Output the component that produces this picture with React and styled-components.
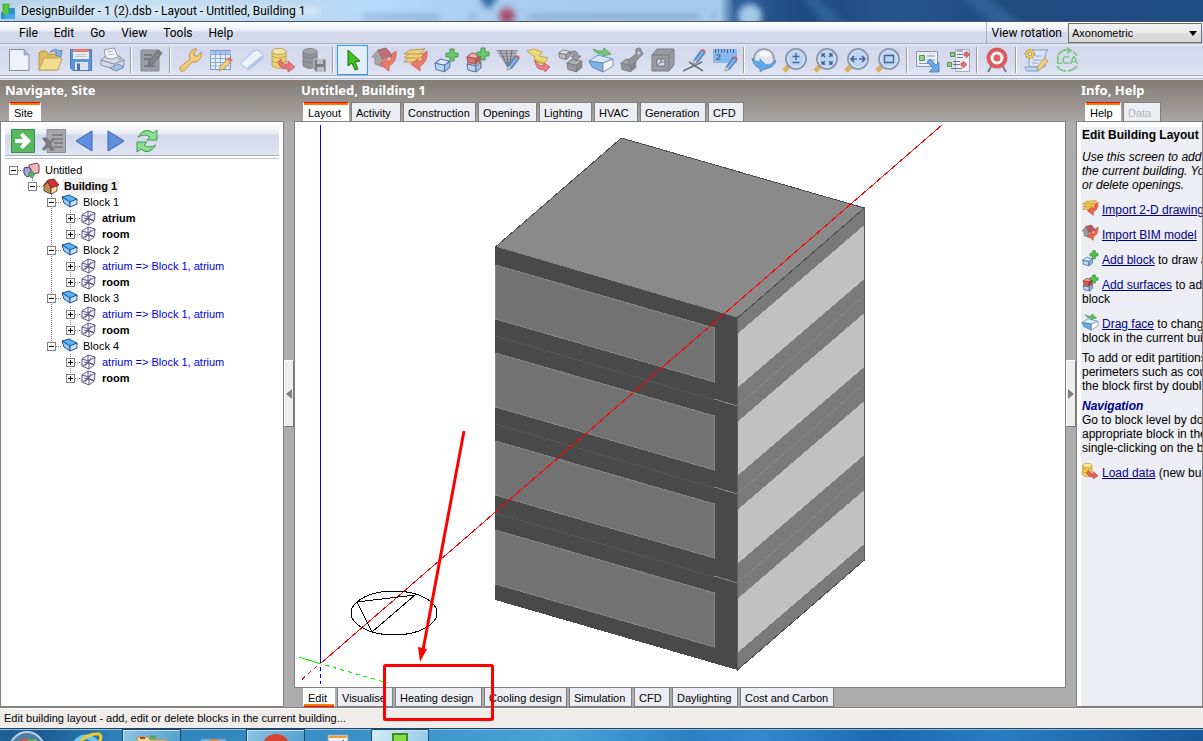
import React from "react";
import styled, { createGlobalStyle, css } from "styled-components";

const UI = '"Liberation Sans", Arial, sans-serif';
const SEGOE = 'Roboto, "Noto Sans", sans-serif';
const LINE = "#808080";

const GlobalStyle = createGlobalStyle`
  * { box-sizing: border-box; }
  body { margin: 0; font: 11px ${UI}; color: #000; overflow: hidden; }
  button { font: inherit; color: inherit; background: none; border: 0; padding: 0; }
  ul { list-style: none; margin: 0; padding: 0; }
  svg { display: block; }
`;

const Window = styled.div`
  height: 100vh;
  display: flex;
  flex-direction: column;
  overflow: hidden;
`;

/* ---------- title bar ---------- */
const TitleBar = styled.header`
  position: relative;
  flex: 0 0 22px;
  display: flex;
  align-items: center;
  gap: 5px;
  border-bottom: 1px solid #46566b;
  background: linear-gradient(90deg, #b4cfe6 0, #c3dcf0 120px, #b9d6ef 300px, #b9dcfb 360px, #a9cef0 480px, #a6caea 720px, #2c5f98 735px, #1d4a80 800px, #26558c 900px, #1e4b80 1010px, #1f4e85 1203px);
`;
const TitleArt = styled.svg`
  position: absolute;
  inset: 0;
  width: 100%;
  height: 100%;
`;
const AppIcon = styled.svg`
  position: relative;
  width: 16px;
  height: 16px;
`;
const TitleText = styled.h1`
  position: relative;
  margin: 0;
  font: 12px/20px ${SEGOE};
  white-space: nowrap;
`;

/* ---------- menus and toolbar ---------- */
const MenuRow = styled.div`
  flex: 0 0 22px;
  display: flex;
  justify-content: space-between;
  border-bottom: 1px solid #a9adb8;
  background: linear-gradient(#fff 0, #e9edf6 9px, #d3d8ea 10px, #d5d9ec 100%);
`;
const MenuBar = styled.nav`
  display: flex;
  gap: 16px;
  padding-left: 19px;
`;
const MenuItem = styled.button`
  font: 12px/20px ${SEGOE};
`;
const RotationBox = styled.label`
  display: flex;
  align-items: center;
  gap: 6px;
  padding: 0 1px 0 5px;
  border-left: 1px solid #a9adb8;
  font: 12px/20px ${SEGOE};
  white-space: nowrap;
`;
const SelectWrap = styled.span`
  position: relative;
  display: block;
`;
const Select = styled.select`
  display: block;
  appearance: none;
  width: 134px;
  height: 20px;
  padding: 0 0 0 3px;
  border: 1px solid #707070;
  border-radius: 0;
  color: #000;
  background: linear-gradient(#f2f2f2, #ebebeb 50%, #dddddd 51%, #d8d8d8);
  font: 11px ${UI};
`;
const SelectArrow = styled.svg`
  position: absolute;
  right: 5px;
  top: 8px;
  pointer-events: none;
`;
const ToolRow = styled.div`
  flex: 0 0 36px;
  display: flex;
  align-items: flex-start;
  padding: 1px 0 0 3px;
  background: linear-gradient(#e6eaf5 0, #d3d8ec 3px, #d5daed 16px, #dfe3f3 31px, #a9adb8 31px, #a9adb8 32px, #e9edf7 32px, #e9edf7 34px, #b9bfd3 34px, #b9bfd3 35px, #dfe4f2 35px);
`;
const ToolButton = styled.button`
  flex: 0 0 31px;
  height: 30px;
  display: grid;
  place-items: center;
  border: 1px solid ${(p) => (p.$on ? "#3399ff" : "transparent")};
  background: ${(p) => (p.$on ? "#e4eefb" : "none")};
  svg { width: 24px; height: 24px; opacity: ${(p) => (p.$on ? 1 : 0.8)}; }
`;
const Separator = styled.span`
  flex: 0 0 8px;
  height: 26px;
  margin-top: 2px;
  background: linear-gradient(90deg, transparent 3px, #9a9ca4 3px, #9a9ca4 4px, #fff 4px, #fff 5px, transparent 5px);
`;

/* ---------- work area ---------- */
const Main = styled.main`
  flex: 1 1 0;
  min-height: 0;
  display: flex;
  background: linear-gradient(#827c75 0, #a3a09e 36px, #acacac 44px);
  border-bottom: 1px solid ${LINE};
`;
const Column = styled.section`
  display: flex;
  flex-direction: column;
  min-width: 0;
  position: relative;
  ${(p) => (p.$w ? css`flex: 0 0 ${p.$w}px;` : css`flex: 1 1 0;`)}
`;
const ColumnTitle = styled.h2`
  margin: 0;
  padding: 0 5px 0 ${(p) => p.$pad || 5}px;
  flex: 0 0 22px;
  font: bold 13px/20px "Noto Sans", "Open Sans", sans-serif;
  color: #fff;
  white-space: nowrap;
`;
const TabRow = styled.div`
  flex: 0 0 19px;
  display: flex;
  gap: 2px;
  padding-left: 9px;
`;
const Tab = styled.button`
  flex: 0 0 ${(p) => p.$w}px;
  height: 19px;
  padding-left: 4px;
  text-align: left;
  white-space: nowrap;
  overflow: hidden;
  line-height: 20px;
  background: #eceef3;
  border: 1px solid ${LINE};
  border-width: ${(p) => (p.$bottom ? "0 1px 1px 1px" : "1px 1px 0 1px")};
  &:disabled { color: #b4b4b8; }
  ${(p) => p.$active && css`
    background: #fff;
    border-color: ${p.$bottom ? "#fff #fff #f00 #fff" : "#f00 #fff #fff #fff"};
    box-shadow: inset 0 ${p.$bottom ? -2 : 2}px 0 #ff7a00;
  `}
`;
const Panel = styled.div`
  flex: 1 1 0;
  min-height: 0;
  overflow: hidden;
  background: #fff;
  border: 1px solid ${LINE};
`;
const Splitter = styled.div`
  flex: 0 0 10px;
  display: flex;
  align-items: center;
`;
const SplitHandle = styled.button`
  width: 10px;
  height: 67px;
  display: grid;
  place-items: center;
  background: #eeeeee;
  border: 1px solid #fff;
  border-color: #fff #777 #777 #fff;
`;

/* ---------- navigator ---------- */
const NavTools = styled.div`
  display: flex;
  align-items: center;
  gap: 7px;
  height: 33px;
  margin: 4px 4px 0 4px;
  padding: 0 0 4px 6px;
  background: linear-gradient(#fdfdff 0, #e6e9f5 8px, #d2d7eb 9px, #dfe4f5 29px, #a9adb8 29px, #a9adb8 30px, #fff 30px, #fff 32px, #b4c0da 32px);
  svg { width: 24px; height: 24px; }
`;
const Tree = styled.ul`
  padding: 3px 0 0 3px;
`;
const TreeRow = styled.li`
  display: flex;
  height: 16px;
  line-height: 16px;
  white-space: nowrap;
`;
const TreeIcon = styled.svg`
  flex: 0 0 18px;
  width: 18px;
  height: 16px;
  margin-right: 2px;
`;
const TreeLabel = styled.span`
  padding: 0 2px;
  color: ${(p) => (p.$link ? "#0000e0" : "#000")};
  font-weight: ${(p) => (p.$bold ? "bold" : "normal")};
  background: ${(p) => (p.$selected ? "#f0f0f0" : "none")};
`;

/* ---------- help ---------- */
const HelpBody = styled.article`
  height: 100%;
  margin: 5px 0 0 4px;
  padding: 1px 0 0 1px;
  background: #eceef3;
  font: 12px/14px ${UI};
  white-space: nowrap;
`;
const HelpHeading = styled.h3`
  margin: 0 0 8px;
  font: bold 12px/14px ${UI};
`;
const HelpText = styled.p`
  margin: 0 0 6px;
  font-style: ${(p) => (p.$italic ? "italic" : "normal")};
  a { color: #00008b; }
  strong { color: #00008b; font-style: italic; }
  svg { display: inline-block; vertical-align: -2px; width: 16px; height: 16px; margin: 2px 4px 0 0; }
`;

/* ---------- canvas ---------- */
const Scene = styled.svg`
  width: 100%;
  height: 100%;
`;
const Markup = styled.svg`
  position: absolute;
  left: 0;
  top: 0;
  width: 100%;
  height: 100%;
  overflow: visible;
  pointer-events: none;
`;

/* ---------- status and task bar ---------- */
const StatusBar = styled.footer`
  flex: 0 0 20px;
  padding: 0 4px;
  border-top: 1px solid #fff;
  line-height: 19px;
  background: #f0ecea;
  white-space: nowrap;
`;
const TaskBar = styled.div`
  flex: 0 0 13px;
  display: flex;
  overflow: hidden;
  border-top: 1px solid #26425f;
  box-shadow: inset 0 1px 0 #8fc3e6;
  background: linear-gradient(90deg, #1d6299 0, #1c5c94 40px, #2c80b8 115px, #3f96cc 430px, #4aa2d8 560px, #2c80c2 690px, #3488cc 760px, #1d69b0 880px, #2a7cc0 1000px, #17599a 1203px);
`;
const TaskButton = styled.button`
  flex: 0 0 ${(p) => p.$w}px;
  height: 40px;
  display: flex;
  justify-content: center;
  border: 1px solid transparent;
  ${(p) => p.$open && css`
    border-color: #1c4a70;
    box-shadow: inset 1px 1px 0 #c5e4f5;
    background: linear-gradient(110deg, ${p.$open === "active" ? "#d5ecf8, #8cc4e4" : "#8dc3e2, #4c9bcb"});
  `}
`;

/* ---------- small shapes shared by icons ---------- */
const Block = ({ x = 0, y = 0, s = 1, top = "#d8edff", side = "#8fbde8", front = "#b5d6f5", edge = "#3d5f93" }) => (
  <g transform={`translate(${x} ${y}) scale(${s})`} stroke={edge} strokeWidth="1" strokeLinejoin="round">
    <path d="M1 5 6 1 15 3 10 7Z" fill={top} />
    <path d="M1 5 10 7V13L2 11Z" fill={front} />
    <path d="M10 7 15 3V9L10 13Z" fill={side} />
  </g>
);
const Plus = ({ x, y }) => (
  <path transform={`translate(${x} ${y})`} d="M4 0h4v4h4v4h-4v4h-4v-4h-4v-4h4z" fill="#52c552" stroke="#258a2b" />
);
const Pencil = ({ x = 0, y = 0, c = "#4a86cf" }) => (
  <g transform={`translate(${x} ${y})`}>
    <path d="M1 15 2 11 9 1 13 4 6 13Z" fill={c} stroke="#29558f" strokeWidth=".8" />
    <path d="M9 1 10 0Q13 0 14 3L13 4Z" fill="#e0483e" />
    <path d="M1 15 2 11 5 13Z" fill="#e9d3a5" />
    <path d="M4 12 11 3" stroke="#a8cbf2" />
  </g>
);
const Curl = () => (
  <path d="M20 6 24 3Q25 14 17 18V23L8 16 15 11V14Q20 13 20 6Z" fill="#f0624a" stroke="#c43a28" strokeWidth=".8" />
);
const Cylinder = ({ x = 0, y = 0, c = "#f3d251", e = "#a8851c", hi = "#fbeb9c" }) => (
  <g transform={`translate(${x} ${y})`} fill={c} stroke={e} strokeWidth=".8">
    <path d="M1 3V18Q8 23 15 18V3" />
    <path d="M1 8Q8 12 15 8M1 13Q8 17 15 13" fill="none" />
    <ellipse cx="8" cy="3.500" rx="7" ry="3" fill={hi} />
  </g>
);
const Lens = ({ children }) => (
  <>
    <path d="M1 23 7 17" stroke="#dba63c" strokeWidth="5" />
    <circle cx="13" cy="11" r="10" fill="#b3d3f6" stroke="#7c8aa0" strokeWidth="2" />
    <circle cx="13" cy="11" r="8.300" fill="none" stroke="#e6f1fd" />
    <g stroke="#2b4476" strokeWidth="1.300" fill="none">{children}</g>
  </>
);

const icons = {
  new: <><path d="M2.500 1.500H17L22 7V22.500H2.500Z" fill="#f6f7fe" stroke="#77798c" /><path d="M17 1.500V7H22Z" fill="#9aa4d8" stroke="#8088b4" strokeWidth=".6" /></>,
  open: <><path d="M1 22V5L3 3H8L10 6H19V22Z" fill="#dcb33a" stroke="#b08920" /><path d="M1 22 6 10H24L20 22Z" fill="#f8dd7c" stroke="#b99530" /><path d="M12 4Q17-1 21 3L24 2 23 9 17 7 19 5Q16 2 12 4Z" fill="#7ba4d6" stroke="#3f6a9e" strokeWidth=".8" /></>,
  save: <><path d="M1.500 1.500H22.500V22.500H4L1.500 20Z" fill="#3d86d8" stroke="#2b5d9c" /><path d="M4 1H20V11H4Z" fill="#f3f3f6" /><path d="M4 1H20V4H4Z" fill="#e86058" /><path d="M6 6.500H18M6 8.500H18" stroke="#c0c2cc" /><path d="M6 14H19V22H6Z" fill="#dfe5ee" /><path d="M8 15.500H11V22H8Z" fill="#2a5a9b" /></>,
  print: <><path d="M1 12 6 8H19L24 12V17L18 22 1 17Z" fill="#d8dae6" stroke="#74788e" /><path d="M6 10 4 2 14 0 18 9 12 11Z" fill="#fff" stroke="#7e8296" /><path d="M7 4 13 3M8 7 14 6" stroke="#a4a9bb" /><path d="M1 12 14 16 24 12M14 16V20" stroke="#74788e" fill="none" /><path d="M10 20 18 16 24 19 16 23Z" fill="#9fc0ec" stroke="#55719c" /><path d="M18 11H21" stroke="#50b050" strokeWidth="1.500" /></>,
  edit: <><path d="M2 2H20V23H2Z" fill="#8f8f93" stroke="#737377" /><path d="M5 7H13M5 11H11M5 18H17" stroke="#55555a" strokeWidth="1.500" /><path d="M9 18 10 13 19 2 23 5 14 16Z" fill="#707074" stroke="#4c4c50" /></>,
  wrench: <path d="M2 19 12 11Q10 4 16 1L19 1 16 5 17 8 20 8 23 4Q25 11 18 14L14 14 6 23Q3 24 2 22Z" fill="#f4c85a" stroke="#b7862b" />,
  table: <><path d="M1.500 2.500H21.500V21.500H1.500Z" fill="#eef5ff" stroke="#5582bb" /><path d="M1 3H22V6H1Z" fill="#9fc2ee" /><path d="M1 6.500H22M1 10.500H22M1 14.500H22M1 18H22M6.500 2V22M11.500 2V22M16.500 2V22" stroke="#7ba0cf" /><g transform="translate(9 8)"><path d="M1 15 2 11 9 3 13 6 6 13Z" fill="#f1c860" stroke="#a37a2a" strokeWidth=".8" /><path d="M9 3 11 1 15 4 13 6Z" fill="#e35d50" /></g></>,
  eraser: <><path d="M1 15 14 3Q17 1 19 3L23 7Q24 9 22 11L10 21Q8 22 6 20L2 17Q1 16 1 15Z" fill="#f4f8fe" stroke="#9fb2d2" /><path d="M7 20 21 8 23 8 22 11 10 21Q8 22 7 20Z" fill="#a6c0e8" /></>,
  load: <><Cylinder x={0} y={0} /><path d="M10 11Q11 17 17 17V13L24 19 17 24V21Q9 22 7 14Z" fill="#ef5c5c" stroke="#b93434" strokeWidth=".8" /></>,
  dbsave: <><Cylinder c="#85858a" e="#606064" hi="#98989c" /><path d="M12 11H24V24H14L12 22Z" fill="#68686c" stroke="#dcdce4" strokeWidth=".8" /><path d="M15 11H21V16H15ZM15 19H22V24H15Z" fill="#b6b6bc" /></>,
  cursor: <path d="M7 2V18L11 15 14 22 17 21 14 14 19 13Z" fill="#3fc21e" stroke="#23700f" />,
  bim: <><path d="M0 9 6 2 11 11V19L3 16V9Z" fill="#a09a94" stroke="#6b6866" strokeWidth=".8" /><path d="M6 2 14 0 21 8 11 12Z" fill="#b8545c" stroke="#7a4a4c" strokeWidth=".8" /><path d="M11 12 18 9V15L11 19Z" fill="#dcc6a4" /><Curl /></>,
  dxf: <><g fill="#f6cf5e" stroke="#a8801f" strokeWidth=".9"><path d="M1 14 7 9H22L17 14Z" /><path d="M1 10 7 5 22 6 17 10Z" /><path d="M1 6 7 2 22 1 17 6Z" /></g><Curl /></>,
  addblock: <><Block x={0} y={10} s={1.05} /><Plus x={12} y={1} /></>,
  addsurf: <><Block x={1} y={11} s={1} edge="#3d4f73" /><Block x={1} y={4} s={0.950} top="#f6a19a" front="#e05a50" side="#c43e36" edge="#8a2f2a" /><Plus x={12} y={0} /></>,
  hatch: <><path d="M0 2H22L13 22Z" fill="#85878c" /><path d="M1 4H21M3 7H20M5 10H18M7 13H17" stroke="#b9bcc4" /><path d="M4 2 13 21M10 2 13 21M16 2 13 21" stroke="#50535a" /><Pencil x={10} y={7} /></>,
  yellow: <><path d="M0 3 7 1 15 4 12 8 21 10 18 15 7 12 8 9Z" fill="#f6db54" stroke="#a5841b" strokeWidth=".8" /><path d="M7 12 18 15 17 17 7 14Z" fill="#cfa322" /><path d="M8 12Q10 18 17 18V15L23 19 18 24V22Q8 22 8 12Z" fill="#ef6a6a" stroke="#b93434" strokeWidth=".8" /></>,
  copy: <><Block x={0} y={1} s={0.8} top="#ddd" front="#bbb" side="#999" edge="#555" /><Block x={8} y={10} s={1.050} top="#aaa" front="#888" side="#777" edge="#666" /><path d="M12 4Q20 1 20 8H23L18 13 13 8H16Q16 5 12 6Z" fill="#8c8c90" stroke="#58585c" strokeWidth=".8" /></>,
  drag: <><path d="M0 13 9 7 24 11 14 15Z" fill="#d9ebff" stroke="#4f7fb8" /><path d="M0 13 14 15V24L3 19Z" fill="#6aabe6" stroke="#3a6da8" /><path d="M14 15 24 11V18L14 24Z" fill="#fafcff" stroke="#66809f" /><path d="M4 1Q9 4 14 3L15 0 22 6 14 8 14 6Q8 7 4 1Z" fill="#5cc45c" stroke="#2c8a34" strokeWidth=".8" /></>,
  cut: <><Block x={0} y={10} s={1.050} top="#999" front="#808084" side="#6e6e72" edge="#707074" /><path d="M8 12 16 6V1L20 0 23 6 19 10 12 17 9 18Z" fill="#838387" stroke="#69696d" /><circle cx="19" cy="5" r="1.500" fill="#cdd1de" /></>,
  hole: <><path d="M1 7 6 1H23V17L18 23H1Z" fill="#8c8c90" stroke="#646468" /><path d="M1 7H18V23M18 7 23 1" stroke="#646468" fill="none" /><path d="M6 11H14V18H6Z" fill="#d6daea" stroke="#5d5d61" /><path d="M6 18 10 14H14M10 14V11" stroke="#5d5d61" fill="none" /></>,
  line: <><path d="M1 23 20 14M7 14 21 23" stroke="#55585e" strokeWidth="1.500" /><Pencil x={10} y={1} /></>,
  measure: <><path d="M0 1H24V15H0Z" fill="#75b2ef" /><path d="M2.500 1V5M5.500 1V4M8.500 1V5M11.500 1V4M14.500 1V5M17.500 1V4M20.500 1V5" stroke="#244c7c" /><text x="3" y="12" fontFamily="Liberation Sans" fontSize="9" fontWeight="bold" fill="#244c7c">2</text><Pencil x={11} y={8} /></>,
  orbit: <><circle cx="12" cy="11" r="10" fill="#e4e7ee" stroke="#85878f" strokeWidth="1.500" /><ellipse cx="13" cy="6" rx="6" ry="3" fill="#fff" /><path d="M0 10Q3 14 8 14V11L14 17Q20 17 24 12 23 19 14 20L8 24V20Q1 18 0 10Z" fill="#3f9cf0" stroke="#2468ad" strokeWidth=".7" /></>,
  zoom: <Lens><path d="M13 5V12M9.500 8.500H16.500M9.500 14.500H16.500" /></Lens>,
  fit: <Lens><path d="M8 9V6H11M8 6 11 9M18 9V6H15M18 6 15 9M8 13V16H11M8 16 11 13M18 13V16H15M18 16 15 13" /></Lens>,
  wide: <Lens><path d="M6 11H12M14 11H20M9 8 6 11 9 14M17 8 20 11 17 14" strokeWidth="1.700" /></Lens>,
  rect: <Lens><path d="M8.500 7.500H17.500V14.500H8.500Z" /></Lens>,
  block1: <><path d="M1.500 3.500H22.500V18.500H1.500Z" fill="#f0f3fa" stroke="#7d8496" /><path d="M4.500 7.500H9.500V12.500H4.500Z" fill="#7fd069" stroke="#3b7f2c" /><path d="M12 8H20M12 12H20M4 15.500H13" stroke="#7d8496" /><path d="M12 14 15 11 21 17 24 14V24H14L18 20Z" fill="#4e9be6" stroke="#2a65a6" strokeWidth=".8" /></>,
  block2: <><path d="M9.500 1.500H23.500V23.500H9.500Z" fill="#f0f3fa" stroke="#9a9fb0" /><path d="M4.500 4.500H8.500V8.500H4.500ZM1.500 14.500H5.500V18.500H1.500Z" fill="#7fd069" stroke="#3b7f2c" /><path d="M11 3H17M11 6.500H17M11 9.500H17M7 13.500H14M7 16.500H14M5 20.500H16" stroke="#555e74" /><path d="M18 5H20V3L24 6.500 20 10V8H18ZM15 15H17V13L21 16.500 17 20V18H15Z" fill="#ea5148" stroke="#a9322c" strokeWidth=".6" /></>,
  target: <><path d="M7 17 3 24M17 17 21 24" stroke="#666" strokeWidth="2" /><circle cx="12" cy="10" r="8.500" fill="#fff" stroke="#dc3b3b" strokeWidth="4" /><circle cx="12" cy="10" r="3.500" fill="#e24343" /></>,
  script: <><path d="M9 2H24Q21 4 21 8V19H5V8Z" fill="#dce9fb" stroke="#6f8db8" /><path d="M1 19H15Q13 21 15 23H3Q1 22 1 19Z" fill="#bcd2f0" stroke="#6f8db8" /><path d="M11 8H18M9 12H17M8 15H14" stroke="#7d9bc6" /><circle cx="6" cy="6" r="4.500" fill="#f4c94e" stroke="#b88e22" strokeWidth="1.500" strokeDasharray="2 1.200" /><circle cx="6" cy="6" r="1.800" fill="#fff" stroke="#b88e22" /><path d="M13 22 14 18 20 10 24 13 17 21Z" fill="#f4cc66" stroke="#a88233" strokeWidth=".8" /></>,
  lca: <><path d="M3 7Q7 1 14 2M12 0 16 2.500 12 5M18 4Q21 5 22 8M2 18Q5 23 11 23M13 23Q19 22 22 18" fill="none" stroke="#61c46a" strokeWidth="1.800" /><text x="12" y="16" textAnchor="middle" fontFamily="Lato" fontSize="12" fontWeight="bold" fill="#61c46a">LCA</text></>,
  go: <><path d="M.5.500H23.500V23.500H.5Z" fill="#58b860" stroke="#3c8a48" /><path d="M4 10H12L9 6 12 4 20 12 12 20 9 18 12 14H4Z" fill="#fff" /></>,
  del: <><path d="M5 .5H23.500V23.500H5Z" fill="#a9a9ad" stroke="#8f8f93" /><path d="M10 6H21M10 10H21M12 14H21M12 18H21" stroke="#77777b" strokeWidth="1.500" /><path d="M0 9 4 8 8 12 12 8 13 10 9 15 13 21 9 22 6 18 2 22 0 20 4 15Z" fill="#7b7b7f" /></>,
  back: <path d="M19 2V22L3 12Z" fill="#5f8fdc" stroke="#3661ac" />,
  fwd: <path d="M4 2V22L20 12Z" fill="#5f8fdc" stroke="#3661ac" />,
  refresh: <g fill="#8fdc96" stroke="#3c9d49"><path d="M3 8Q10-3 18 4L22 1V11H12L15 8Q10 4 3 8Z" /><path d="M21 16Q14 27 6 20L2 23V13H12L9 16Q14 20 21 16Z" /></g>,
};
const Icon = ({ name, ...rest }) => (
  <svg viewBox="0 0 24 24" overflow="visible" aria-hidden="true" {...rest}>{icons[name]}</svg>
);

const toolGroups = [
  [["new", "New"], ["open", "Open"], ["save", "Save"], ["print", "Print"]],
  [["edit", "Edit"]],
  [["wrench", "Options"], ["table", "Edit table"], ["eraser", "Clear"], ["load", "Load data"], ["dbsave", "Save data"]],
  [["cursor", "Select"], ["bim", "Import BIM model"], ["dxf", "Import 2-D drawing"], ["addblock", "Add block"], ["addsurf", "Add surfaces"], ["hatch", "Draw surface"], ["yellow", "Move"], ["copy", "Clone"], ["drag", "Drag face"], ["cut", "Cut"], ["hole", "Perimeter"], ["line", "Draw line"], ["measure", "Measure"]],
  [["orbit", "Orbit"], ["zoom", "Zoom"], ["fit", "Fit view"], ["wide", "Pan"], ["rect", "Zoom window"]],
  [["block1", "Library"], ["block2", "Transfer"]],
  [["target", "Target"]],
  [["script", "Script"], ["lca", "LCA"]],
];

const topTabs = [["Layout", 46], ["Activity", 50], ["Construction", 73], ["Openings", 59], ["Lighting", 53], ["HVAC", 44], ["Generation", 66], ["CFD", 36]];
const bottomTabs = [["Edit", 32], ["Visualise", 56], ["Heating design", 87], ["Cooling design", 83], ["Simulation", 63], ["CFD", 36], ["Daylighting", 66], ["Cost and Carbon", 94]];

/* line guides per row: one code for each ancestor column, then the row's own column */
const blockRows = (n) => {
  const last = n === 4;
  const trunk = last ? "" : "v";
  return [
    { id: `b${n}`, cells: ["", "", last ? "end" : "mid"], open: true, icon: "block", text: `Block ${n}` },
    n === 1
      ? { id: `a${n}`, cells: ["", "", trunk, "mid"], icon: "zone", text: "atrium", bold: true }
      : { id: `a${n}`, cells: ["", "", trunk, "mid"], icon: "zone", text: "atrium => Block 1, atrium", link: true },
    { id: `r${n}`, cells: ["", "", trunk, "end"], icon: "zone", text: "room", bold: true },
  ];
};
const treeRows = [
  { id: "site", cells: ["root"], open: true, icon: "site", text: "Untitled" },
  { id: "bld", cells: ["", "end"], open: true, icon: "house", text: "Building 1", bold: true, selected: true },
  ...[1, 2, 3, 4].flatMap(blockRows),
];

const treeIcons = {
  site: <><path d="M6 3 14 1 16 3V11L8 12Z" fill="#f0b6b6" stroke="#6d4a4e" /><path d="M1 6 5 5 8 7V13L4 15 1 12Z" fill="#a3a3d8" stroke="#44446e" /><path d="M6 11 9 9 12 12 9 16 6 14Z" fill="#58b065" stroke="#2f7a3b" strokeWidth=".7" /></>,
  house: <><path d="M2 7 6 3 9 9V16L2 13Z" fill="#b98e52" stroke="#54381c" strokeWidth=".8" /><path d="M9 9 15 7V13L9 16Z" fill="#f3e0ad" stroke="#54381c" strokeWidth=".8" /><path d="M1 8 6 2 12 1 17 7 9 10 6 4Z" fill="#cf3434" stroke="#6e1b1b" strokeWidth=".8" /></>,
  block: <g stroke="#27508f" strokeLinejoin="round"><path d="M1 3 8 1 16 5 9 8Z" fill="#54b4f6" /><path d="M1 3 9 8V13L3 9Z" fill="#8ecbfb" /><path d="M9 8 16 5V10L9 13Z" fill="#cfe8ff" /></g>,
  zone: <g fill="none" stroke="#55548a"><path d="M2 5 8 1 15 3 14 11 9 15 2 12Z" /><path d="M2 5 9 7 15 3M9 7V15M8 1V9L2 12M8 9 14 11M4 8 13 10M11 4 5 12" /></g>,
};

function Guide({ kind, open }) {
  const dot = { stroke: "#808080", strokeDasharray: "1 1" };
  const own = kind !== "" && kind !== "v";
  return (
    <svg width="19" height="16" shapeRendering="crispEdges" aria-hidden="true">
      {(kind === "v" || kind === "mid") && <path d="M9.500 0V16" {...dot} />}
      {kind === "end" && <path d="M9.500 0V4" {...dot} />}
      {own && (
        <>
          <path d="M14 8.500H19" {...dot} />
          <rect x="5.500" y="4.500" width="8" height="8" fill="#fff" stroke="#808080" />
          <path d={open ? "M7 8.500H12" : "M7 8.500H12M9.500 6V11"} stroke="#000" />
        </>
      )}
    </svg>
  );
}

const Tabs = ({ items, bottom, active, label }) => (
  <TabRow role="tablist" aria-label={label}>
    {items.map(([text, w, disabled]) => (
      <Tab key={text} role="tab" type="button" $w={w} $bottom={bottom} $active={text === active} aria-selected={text === active} disabled={disabled}>
        {text}
      </Tab>
    ))}
  </TabRow>
);

const storeys = [0, 88, 176, 265];

function Building() {
  return (
    <g shapeRendering="crispEdges" transform="translate(-0.6 0)">
      <path d="M622 138 865 208 738 318 496 247Z" fill="#8a8a8a" stroke="#4d4d4d" />
      <path d="M496 247 738 318V670L496 600Z" fill="#494949" />
      <path d="M738 318 865 208V560L738 670Z" fill="#7a7a7a" stroke="#4d4d4d" />
      {storeys.map((dy) => (
        <g key={dy} transform={`translate(0 ${dy})`}>
          <path d="M496 265 715 328V382L496 319Z" fill="#727272" stroke="#858585" />
          <path d="M739 333 865 225V279L739 387Z" fill="#c1c1c1" />
          {dy > 0 && <path d="M496 248 715 312" stroke="#555" />}
          {dy > 0 && <path d="M715 311 738 318" stroke="#858585" />}
          {dy > 0 && <path d="M738 318 865 208" stroke="#868686" />}
        </g>
      ))}
      <path d="M738.500 318V669M865 208V560" stroke="#5e5e5e" />
    </g>
  );
}

const helpLinks = [
  ["dxf", "Import 2-D drawing", " file", null],
  ["bim", "Import BIM model", "", null],
  ["addblock", "Add block", " to draw a block", null],
  ["addsurf", "Add surfaces", " to add surfaces", "block"],
  ["drag", "Drag face", " to change the", "block in the current building"],
];

export default function App() {
  return (
    <Window>
      <GlobalStyle />
      <TitleBar>
        <TitleArt aria-hidden="true">
          <defs><filter id="soft"><feGaussianBlur stdDeviation="3" /></filter></defs>
          <g filter="url(#soft)">
            <path d="M478-6H500L488 10Z" fill="#2e629b" />
            <circle cx="507" cy="16" r="8" fill="#a8486c" />
            <path d="M362 17H440M470 17H477M528 17H700M712 17H716" stroke="#6f91b5" strokeWidth="6" opacity=".5" />
            <circle cx="750" cy="16" r="12" fill="#a5c8e6" />
            <path d="M800-5 830 30H850L815-5ZM960-5 1000 30H1030L985-5Z" fill="#3c73ad" opacity=".5" />
            <path d="M15 11H320" stroke="#eef5fa" strokeWidth="10" opacity=".5" />
          </g>
        </TitleArt>
        <AppIcon viewBox="0 0 16 16" aria-hidden="true">
          <path d="M1 9H7V16H1ZM9 5H15V16H9Z" fill="#2f93dc" />
          <path d="M3 1H9V12H3Z" fill="#55c838" stroke="#2f9420" strokeWidth=".6" />
          <path d="M5 11H15V16H5Z" fill="#41a8ea" />
        </AppIcon>
        <TitleText>DesignBuilder - 1 (2).dsb - Layout - Untitled, Building 1</TitleText>
      </TitleBar>

      <MenuRow>
        <MenuBar aria-label="Main menu">
          {["File", "Edit", "Go", "View", "Tools", "Help"].map((m) => <MenuItem key={m} type="button">{m}</MenuItem>)}
        </MenuBar>
        <RotationBox>
          View rotation
          <SelectWrap>
            <Select defaultValue="Axonometric"><option>Axonometric</option><option>Plan</option></Select>
            <SelectArrow width="8" height="5" aria-hidden="true"><path d="M0 0H8L4 5Z" /></SelectArrow>
          </SelectWrap>
        </RotationBox>
      </MenuRow>

      <ToolRow role="toolbar" aria-label="Tools">
        {toolGroups.map((group, i) => (
          <React.Fragment key={group[0][0]}>
            {i > 0 && <Separator />}
            {group.map(([name, label]) => (
              <ToolButton key={name} type="button" aria-label={label} $on={name === "cursor"}><Icon name={name} /></ToolButton>
            ))}
          </React.Fragment>
        ))}
      </ToolRow>

      <Main>
        <Column $w={284}>
          <ColumnTitle>Navigate, Site</ColumnTitle>
          <Tabs label="Navigator" items={[["Site", 32]]} active="Site" />
          <Panel>
            <NavTools>
              {[["go", "Go"], ["del", "Delete"], ["back", "Back"], ["fwd", "Forward"], ["refresh", "Refresh"]].map(([name, label]) => (
                <button key={name} type="button" aria-label={label}><Icon name={name} /></button>
              ))}
            </NavTools>
            <Tree>
              {treeRows.map((r) => (
                <TreeRow key={r.id}>
                  {r.cells.map((kind, i) => <Guide key={i} kind={kind} open={r.open} />)}
                  <TreeIcon viewBox="0 0 18 16" aria-hidden="true">{treeIcons[r.icon]}</TreeIcon>
                  <TreeLabel $bold={r.bold} $link={r.link} $selected={r.selected}>{r.text}</TreeLabel>
                </TreeRow>
              ))}
            </Tree>
          </Panel>
        </Column>

        <Splitter>
          <SplitHandle type="button" aria-label="Collapse navigator"><svg width="6" height="10"><path d="M6 0V10L0 5Z" fill="#808080" /></svg></SplitHandle>
        </Splitter>

        <Column>
          <ColumnTitle $pad={7}>Untitled, Building 1</ColumnTitle>
          <Tabs label="Model data" items={topTabs} active="Layout" />
          <Panel>
            <Scene role="img" aria-label="Axonometric view of a four storey building">
              <g transform="translate(-295 -122)" fill="none">
                <Building />
                <g shapeRendering="crispEdges">
                  <path d="M320.500 125V664" stroke="#0000f0" />
                  <path d="M320.500 667V684" stroke="#0000f0" strokeDasharray="4 3" />
                  <path d="M320 664 942 125" stroke="#f00" />
                  <path d="M317 666 299 682" stroke="#f00" strokeDasharray="4 4" />
                  <path d="M299 657 321 664" stroke="#0f0" />
                  <path d="M325 665 388 683" stroke="#0f0" strokeDasharray="4 4" />
                  <ellipse cx="394" cy="613" rx="43" ry="22" stroke="#000" />
                  <path d="M357 602 415 595 372 632Z" stroke="#000" />
                </g>
              </g>
            </Scene>
          </Panel>
          <Tabs label="Screens" items={bottomTabs} active="Edit" bottom />
          <Markup aria-hidden="true">
            <g transform="translate(-294 -80)">
              <path d="M464 431 423 650" stroke="#f00" strokeWidth="3" />
              <path d="M418 647 427 649 420 662Z" fill="#f00" />
              <rect x="384.500" y="665.500" width="108" height="54" rx="1" fill="none" stroke="#f00" strokeWidth="3" />
            </g>
          </Markup>
        </Column>

        <Splitter>
          <SplitHandle type="button" aria-label="Collapse help"><svg width="6" height="10"><path d="M0 0V10L6 5Z" fill="#808080" /></svg></SplitHandle>
        </Splitter>

        <Column $w={127}>
          <ColumnTitle>Info, Help</ColumnTitle>
          <Tabs label="Information" items={[["Help", 36], ["Data", 38, true]]} active="Help" />
          <Panel>
            <HelpBody>
              <HelpHeading>Edit Building Layout</HelpHeading>
              <HelpText $italic>Use this screen to add blocks to<br />the current building. You can<br />or delete openings.</HelpText>
              {helpLinks.map(([icon, link, rest, more]) => (
                <HelpText key={link}>
                  <Icon name={icon} /><a href={`#${icon}`}>{link}</a>{rest}
                  {more && <><br />{more}</>}
                </HelpText>
              ))}
              <HelpText>To add or edit partitions<br />perimeters such as courtyards<br />the block first by double-clicking</HelpText>
              <HelpText><strong>Navigation</strong><br />Go to block level by double-clicking<br />appropriate block in the<br />single-clicking on the block</HelpText>
              <HelpText><Icon name="load" /><a href="#load">Load data</a> (new building)</HelpText>
            </HelpBody>
          </Panel>
        </Column>
      </Main>

      <StatusBar>Edit building layout - add, edit or delete blocks in the current building...</StatusBar>

      <TaskBar>
        <TaskButton $w={54} type="button" aria-label="Start">
          <svg width="36" height="36"><circle cx="18" cy="19" r="17" fill="#4d7ea6" stroke="#b7d2e6" strokeWidth="2" /><path d="M9 13Q13 7 18 9V16H8Z" fill="#d8502c" /><path d="M19 9Q23 11 27 9V16H19Z" fill="#83b54a" /></svg>
        </TaskButton>
        <TaskButton $w={68} type="button" aria-label="Internet Explorer">
          <svg width="34" height="36"><circle cx="15" cy="19" r="12" fill="none" stroke="#70c8f4" strokeWidth="5" /><path d="M4 20Q12 3 28 4Q32 6 28 12" fill="none" stroke="#f4c92c" strokeWidth="3" /></svg>
        </TaskButton>
        <TaskButton $w={59} $open="open" type="button" aria-label="Explorer">
          <svg width="32" height="36"><path d="M1 7H12L14 10H30V36H1Z" fill="#f0d78b" stroke="#b59245" /><path d="M4 8H9" stroke="#c33" strokeWidth="2" /><path d="M14 7H20" stroke="#5a9e44" strokeWidth="3" /></svg>
        </TaskButton>
        <TaskButton $w={65} type="button" aria-label="Media">
          <svg width="28" height="36"><path d="M1 9H26V36H1Z" fill="#8fb6d4" stroke="#5d8fb5" /><circle cx="14" cy="16" r="7" fill="#e28a3c" /></svg>
        </TaskButton>
        <TaskButton $w={59} $open="open" type="button" aria-label="Browser">
          <svg width="30" height="36"><circle cx="15" cy="18" r="14" fill="#d84535" /></svg>
        </TaskButton>
        <TaskButton $w={66} type="button" aria-label="Notes">
          <svg width="22" height="36"><path d="M1 5H21V36H1Z" fill="#eef3f8" stroke="#8397a8" /><path d="M2 6H20V8H2Z" fill="#f09a30" /><path d="M14 12 17 10" stroke="#556" /></svg>
        </TaskButton>
        <TaskButton $w={58} $open="active" type="button" aria-label="DesignBuilder">
          <svg width="18" height="36"><path d="M2 4H16V36H2Z" fill="#86dc42" stroke="#3b8f25" strokeWidth="2" /></svg>
        </TaskButton>
      </TaskBar>
    </Window>
  );
}
